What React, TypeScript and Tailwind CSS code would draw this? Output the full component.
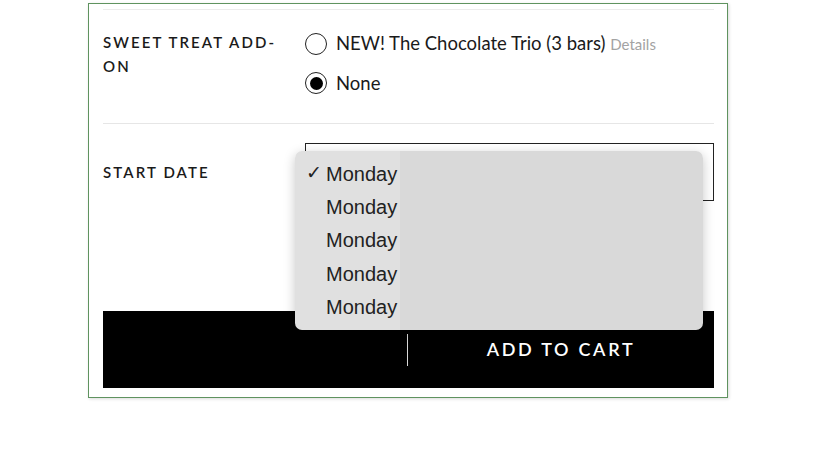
import React from "react";

const days = ["Monday", "Monday", "Monday", "Monday", "Monday"];

const Radio: React.FC<{ checked?: boolean }> = ({ checked }) => (
  <span className="flex h-[22px] w-[22px] shrink-0 items-center justify-center rounded-full border-[1.5px] border-[#222]">
    {checked && <span className="h-[13px] w-[13px] rounded-full bg-black" />}
  </span>
);

const App: React.FC = () => {
  return (
    <div className="h-[452px] w-[814px] bg-white pl-[88px] pt-[3px] font-['Lato',sans-serif] text-[#1a1a1a]">
      <div className="relative flex h-[395px] w-[640px] flex-col border border-[#5f935f] pl-[14px] pr-[13px] shadow-[1px_1px_3px_rgba(0,0,0,0.15)]">
        <div className="mt-[5px] border-t border-[#ececec]" />

        {/* add-on */}
        <div className="grid h-[113px] grid-cols-[202px_1fr] pt-[20px]">
          <p className="w-[180px] text-[15px] font-semibold uppercase leading-[24px] tracking-[0.14em]">
            Sweet treat add-on
          </p>
          <div className="flex flex-col gap-[13px]">
            <label className="flex items-center gap-[9px] text-[18.5px] leading-[26px]">
              <Radio />
              <span>
                NEW! The Chocolate Trio (3 bars){" "}
                <span className="text-[15px] text-[#a3a3a3]">Details</span>
              </span>
            </label>
            <label className="flex items-center gap-[9px] text-[18.5px] leading-[26px]">
              <Radio checked />
              <span>None</span>
            </label>
          </div>
        </div>

        <div className="border-t border-[#e6e6e6]" />

        {/* start date */}
        <div className="grid h-[187px] grid-cols-[202px_1fr] pt-[19px]">
          <p className="pt-[17px] text-[15px] font-semibold uppercase leading-[24px] tracking-[0.14em]">
            Start date
          </p>
          <div className="h-[58px] border border-[#222]" />
        </div>

        <button className="relative flex h-[77px] items-center bg-black text-white">
          <span className="ml-[304px] h-[32px] w-px bg-[#d8d8d8]" />
          <span className="flex-1 text-center text-[18px] font-semibold tracking-[0.15em]">
            ADD TO CART
          </span>
        </button>

        {/* open select list */}
        <div className="absolute left-[206px] top-[147px] w-[408px] rounded-[7px] bg-[linear-gradient(to_right,#e0e0e0_105px,#d9d9d9_105px)] py-[6px] font-['Liberation_Sans',sans-serif] text-[20px] text-[#222] shadow-[0_3px_12px_rgba(0,0,0,0.22)]">
          {days.map((d, i) => (
            <div key={i} className="flex h-[33.4px] items-center">
              <span className="w-[31px] pl-[11px] text-[19px]">{i === 0 ? "✓" : ""}</span>
              <span>{d}</span>
            </div>
          ))}
        </div>
      </div>
    </div>
  );
};

export default App;
